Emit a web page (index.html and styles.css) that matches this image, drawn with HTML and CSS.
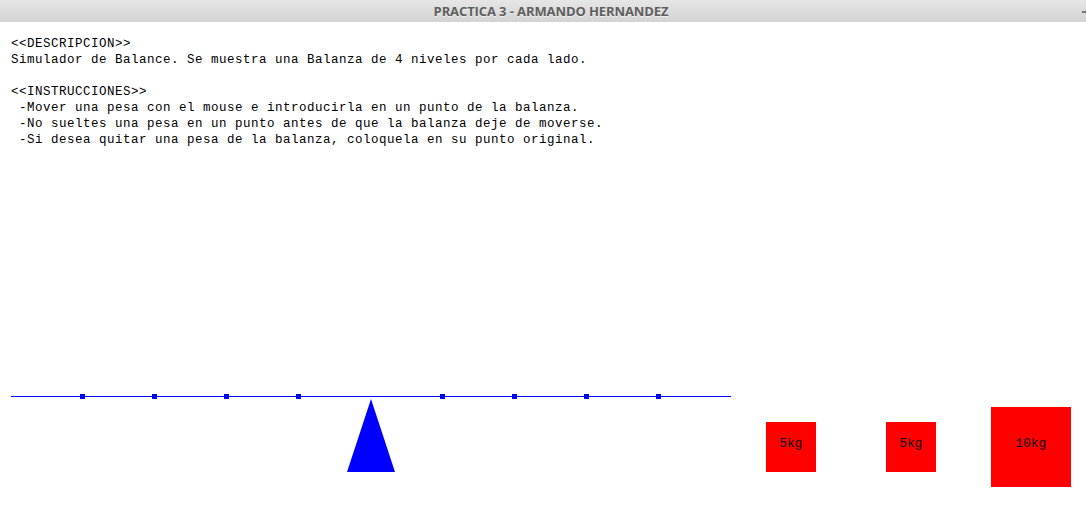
FILE: index.html
```html
<!DOCTYPE html>
<html>
<head>
<meta charset="utf-8">
<link rel="stylesheet" href="styles.css">
</head>
<body>
<div class="titlebar">
  <span class="title">PRACTICA 3 - ARMANDO HERNANDEZ</span>
  <span class="minimize"></span>
</div>
<div class="canvas">
  <div class="info">
    <div class="line">&lt;&lt;DESCRIPCION&gt;&gt;</div>
    <div class="line">Simulador de Balance. Se muestra una Balanza de 4 niveles por cada lado.</div>
    <div class="line">&nbsp;</div>
    <div class="line">&lt;&lt;INSTRUCCIONES&gt;&gt;</div>
    <div class="line"> -Mover una pesa con el mouse e introducirla en un punto de la balanza.</div>
    <div class="line"> -No sueltes una pesa en un punto antes de que la balanza deje de moverse.</div>
    <div class="line"> -Si desea quitar una pesa de la balanza, coloquela en su punto original.</div>
  </div>
  <svg class="balance" width="1086" height="490" viewBox="0 0 1086 490">
    <rect x="11" y="396" width="720" height="1" fill="#0000ff"/>
    <rect x="80" y="394" width="5" height="5" fill="#0000ff"/>
    <rect x="152" y="394" width="5" height="5" fill="#0000ff"/>
    <rect x="224" y="394" width="5" height="5" fill="#0000ff"/>
    <rect x="296" y="394" width="5" height="5" fill="#0000ff"/>
    <rect x="440" y="394" width="5" height="5" fill="#0000ff"/>
    <rect x="512" y="394" width="5" height="5" fill="#0000ff"/>
    <rect x="584" y="394" width="5" height="5" fill="#0000ff"/>
    <rect x="656" y="394" width="5" height="5" fill="#0000ff"/>
    <polygon points="371,399 395,472 347,472" fill="#0000ff"/>
  </svg>
  <div class="weight w5a">5kg</div>
  <div class="weight w5b">5kg</div>
  <div class="weight w10">10kg</div>
</div>
</body>
</html>
```
FILE: styles.css
```css
html, body {
  margin: 0;
  padding: 0;
  background: #ffffff;
}
body {
  width: 1086px;
  height: 512px;
  overflow: hidden;
}
.titlebar {
  position: relative;
  height: 22px;
  background: linear-gradient(#e6e6e6, #d3d3d3);
  display: flex;
  align-items: center;
  justify-content: center;
}
.title {
  font-family: "Open Sans", "Liberation Sans", sans-serif;
  font-weight: 700;
  font-size: 13px;
  color: #5e5e5e;
  letter-spacing: -0.1px;
  text-shadow: 0 1px 0 rgba(255,255,255,0.6);
  margin-left: 16px;
}
.minimize {
  position: absolute;
  right: 0;
  top: 11px;
  width: 4px;
  height: 2px;
  background: #777777;
}
.canvas {
  position: relative;
  height: 490px;
}
.info {
  position: relative;
  z-index: 1;
  padding: 14px 0 0 11px;
  font-family: "Liberation Mono", "DejaVu Sans Mono", monospace;
  font-size: 12.5px;
  letter-spacing: 0.5px;
  line-height: 16px;
  color: #000000;
}
.line {
  white-space: pre;
}
.balance {
  position: absolute;
  left: 0;
  top: -22px;
}
.weight {
  position: absolute;
  background: #ff0000;
  color: #000000;
  font-family: "Liberation Mono", "DejaVu Sans Mono", monospace;
  font-size: 12.5px;
  letter-spacing: 0.2px;
  display: flex;
  align-items: center;
  justify-content: center;
}
.w5a {
  left: 766px;
  top: 400px;
  width: 50px;
  height: 50px;
  padding-bottom: 6px;
  box-sizing: border-box;
}
.w5b {
  left: 886px;
  top: 400px;
  width: 50px;
  height: 50px;
  padding-bottom: 6px;
  box-sizing: border-box;
}
.w10 {
  left: 991px;
  top: 385px;
  width: 80px;
  height: 80px;
  padding-bottom: 6px;
  box-sizing: border-box;
}
```
